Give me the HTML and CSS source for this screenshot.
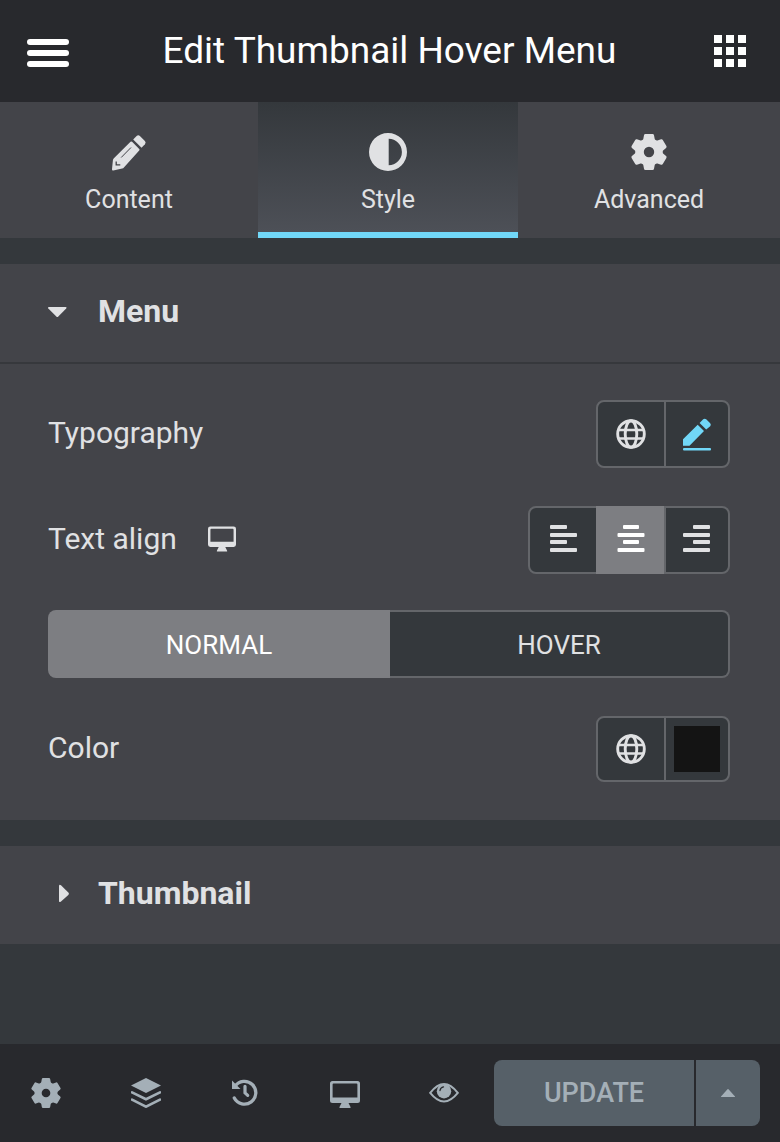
FILE: index.html
```html
<!DOCTYPE html>
<html lang="en">
<head>
<meta charset="utf-8">
<meta name="viewport" content="width=device-width, initial-scale=1">
<title>Edit Thumbnail Hover Menu</title>
<link rel="stylesheet" href="styles.css">
</head>
<body>
<svg class="sprite" aria-hidden="true">
  <symbol id="gear" viewBox="-18 -18 36 36">
    <circle r="9.5" fill="none" stroke="currentColor" stroke-width="8.6"/>
    <g fill="currentColor">
      <path id="tooth" d="M-6-11.5L-5-16.8Q-4.800-18-3.600-18H3.600Q4.800-18 5-16.800L6-11.500Z"/>
      <use href="#tooth" transform="rotate(60)"/>
      <use href="#tooth" transform="rotate(120)"/>
      <use href="#tooth" transform="rotate(180)"/>
      <use href="#tooth" transform="rotate(240)"/>
      <use href="#tooth" transform="rotate(300)"/>
    </g>
  </symbol>
  <symbol id="desktop" viewBox="0 0 30 27">
    <path fill="currentColor" fill-rule="evenodd" d="M2.500 0H27.500Q30 0 30 2.500V19.500Q30 22 27.500 22H18.500L20.500 26V27H9.500V26L11.500 22H2.500Q0 22 0 19.500V2.500Q0 0 2.500 0ZM3.500 2.600Q2.600 2.600 2.600 3.500V16.500H27.400V3.500Q27.400 2.600 26.500 2.600Z"/>
  </symbol>
  <symbol id="globe" viewBox="-15 -15 30 30">
    <g fill="none" stroke="currentColor" stroke-width="2.900">
      <circle r="13.300"/>
      <ellipse rx="5.800" ry="13.300"/>
      <path d="M-12.600-3.900H12.600M-12.600 4.500H12.600" stroke-width="2.500"/>
    </g>
  </symbol>
</svg>

<header class="header">
  <button class="icon-button" type="button" aria-label="Menu">
    <svg width="42" height="34" viewBox="0 0 42 34" fill="#fff"><rect y="5" width="42" height="6" rx="3"/><rect y="16" width="42" height="6" rx="3"/><rect y="27" width="42" height="6" rx="3"/></svg>
  </button>
  <h1 class="title">Edit Thumbnail Hover Menu</h1>
  <button class="icon-button" type="button" aria-label="Widgets">
    <svg width="32" height="34" viewBox="0 0 32 34" fill="#fff"><path d="M0 1h8v8H0zM12 1h8v8h-8zM24 1h8v8h-8zM0 13h8v8H0zM12 13h8v8h-8zM24 13h8v8h-8zM0 25h8v8H0zM12 25h8v8h-8zM24 25h8v8h-8z"/></svg>
  </button>
</header>

<nav class="tabs" role="tablist">
  <button class="tab" type="button" role="tab" aria-selected="false">
    <svg width="36" height="38" viewBox="0 -2 36 38"><g fill="currentColor"><path d="M19.500 6.800Q20.300 6 21.100 6.800L28.200 13.900Q29 14.700 28.200 15.500L12.900 32.400Q12.300 33.300 11.200 33.500L2.300 35.500Q.9 35.700 1 34.200L1.900 25.200Q2 24 2.900 23.200Z"/><path d="M22.200 4.400L25.600 1.100Q27.300-.4 28.900 1.100L33.900 6.100Q35.400 7.700 33.900 9.300L30.500 12.700Z"/></g><path d="M10.200 22.500L20 12.500" stroke="#434449"/><path d="M5.200 26.600V29.800H9.300" fill="none" stroke="#434449" stroke-width="1.300"/></svg>
    <span>Content</span>
  </button>
  <button class="tab tab-active" type="button" role="tab" aria-selected="true">
    <svg width="38" height="38" viewBox="-19 -19 38 38"><path fill="currentColor" fill-rule="evenodd" d="M0-19A19 19 0 0 1 0 19A19 19 0 0 1 0-19ZM.7-13.200V13.200A13.200 13.200 0 0 0 .7-13.200Z"/></svg>
    <span>Style</span>
  </button>
  <button class="tab" type="button" role="tab" aria-selected="false">
    <svg width="36" height="38" viewBox="0 0 36 38"><use href="#gear" y="1" width="36" height="36"/></svg>
    <span>Advanced</span>
  </button>
</nav>

<main class="sections">
  <section class="section">
    <h2 class="section-heading">
      <button class="section-toggle" type="button" aria-expanded="true">
        <svg width="22" height="18" viewBox="0 0 22 18"><path fill="currentColor" d="M1 5H17.500Q19.200 5.300 18.200 6.500L10.300 14.500Q9.300 15.500 8.300 14.500L.3 6.500Q-.7 5.300 1 5Z"/></svg>
        Menu
      </button>
    </h2>
    <div class="section-body">
      <div class="control">
        <span class="label">Typography</span>
        <div class="group">
          <button class="cell" type="button" aria-label="Global typography"><svg width="30" height="30"><use href="#globe"/></svg></button>
          <button class="cell cell-accent" type="button" aria-label="Edit typography"><svg width="30" height="34" viewBox="0 -1 30 34" fill="currentColor"><path d="M1 21.300L15.700 6.700L22 12.900L7.500 27.700H1ZM17.600 4.900L21.200 1.300Q22.700 0 24.200 1.300L28.200 5.200Q29.500 6.700 28.200 8.200L24.200 11.400Z"/><rect x="1" y="30" width="28" height="2.500" rx="1"/></svg></button>
        </div>
      </div>
      <div class="control control-align">
        <span class="label" id="align-label">Text align <button class="device" type="button" aria-label="Desktop"><svg width="28" height="26"><use href="#desktop"/></svg></button></span>
        <div class="group" role="radiogroup" aria-labelledby="align-label">
          <label class="cell"><input type="radio" name="align" value="left" aria-label="Left"><svg width="28" height="30" viewBox="0 0 28 30" fill="currentColor"><rect x="1" width="17" height="4" rx="1"/><rect x="1" y="8" width="27" height="4" rx="1"/><rect x="1" y="15" width="17" height="4" rx="1"/><rect x="1" y="23" width="27" height="4" rx="1"/></svg></label>
          <label class="cell"><input type="radio" name="align" value="center" aria-label="Center" checked><svg width="28" height="30" viewBox="0 0 28 30" fill="currentColor"><rect x="6" width="16" height="4" rx="1"/><rect x=".5" y="8" width="27" height="4" rx="1"/><rect x="6" y="15" width="16" height="4" rx="1"/><rect x=".5" y="23" width="27" height="4" rx="1"/></svg></label>
          <label class="cell"><input type="radio" name="align" value="right" aria-label="Right"><svg width="28" height="30" viewBox="0 0 28 30" fill="currentColor"><rect x="10" width="17" height="4" rx="1"/><rect y="8" width="27" height="4" rx="1"/><rect x="10" y="15" width="17" height="4" rx="1"/><rect y="23" width="27" height="4" rx="1"/></svg></label>
        </div>
      </div>
      <div class="states" role="tablist">
        <button class="state state-active" type="button" role="tab" aria-selected="true">NORMAL</button>
        <button class="state" type="button" role="tab" aria-selected="false">HOVER</button>
      </div>
      <div class="control control-color">
        <label class="label" for="color">Color</label>
        <div class="group">
          <button class="cell" type="button" aria-label="Global color"><svg width="30" height="30"><use href="#globe"/></svg></button>
          <span class="cell"><input class="swatch" type="color" id="color" value="#141414"></span>
        </div>
      </div>
    </div>
  </section>

  <section class="section">
    <h2 class="section-heading">
      <button class="section-toggle" type="button" aria-expanded="false">
        <svg width="22" height="18" viewBox="0 0 22 18"><path fill="currentColor" d="M11 2Q11.200 0 13 1.300L20.300 8.500Q21.500 9.700 20.300 10.900L13 17.600Q11.200 18.800 11 17Z"/></svg>
        Thumbnail
      </button>
    </h2>
  </section>
</main>

<footer class="footer">
  <div class="tools">
    <button class="tool" type="button" aria-label="Settings"><svg width="30" height="30"><use href="#gear"/></svg></button>
    <button class="tool" type="button" aria-label="Navigator"><svg width="30" height="30" viewBox="0 0 30 30"><path fill="currentColor" d="M15 0L30 7.500L15 15L0 7.500Z"/><path d="M1 14.300L15 21.200L29 14.300M1 21.700L15 28.700L29 21.700" fill="none" stroke="currentColor" stroke-width="2.600" stroke-linecap="round"/></svg></button>
    <button class="tool" type="button" aria-label="History"><svg width="30" height="30" viewBox="0 0 30 30"><g fill="none" stroke="currentColor" stroke-linecap="round"><path d="M5 8.300A11.400 11.400 0 1 1 4.300 20" stroke-width="3.300"/><path d="M15 8.300V14.800L17.700 17.300" stroke-width="3.200"/></g><path fill="currentColor" d="M2 2.500L10.500 11H2Z"/></svg></button>
    <button class="tool" type="button" aria-label="Responsive mode"><svg width="30" height="30" viewBox="0 -3 30 30"><use href="#desktop" width="30" height="27"/></svg></button>
    <button class="tool" type="button" aria-label="Preview"><svg width="30" height="30" viewBox="0 0 30 30"><path d="M1.200 14.800Q15-3 28.800 14.800Q15 32 1.200 14.800Z" fill="none" stroke="currentColor" stroke-width="2"/><circle cx="15" cy="13.200" r="7.200" fill="currentColor"/><path d="M11 12.500Q11.400 9.500 14.500 8.900" fill="none" stroke="#28292d" stroke-width="1.300" stroke-linecap="round"/></svg></button>
  </div>
  <div class="publish">
    <button class="update" type="button">UPDATE</button>
    <button class="update-more" type="button" aria-label="Save options"><svg width="16" height="10" viewBox="0 0 16 10"><path fill="currentColor" d="M1 8.400L7.500 1.200Q8 .7 8.500 1.200L15 8.400V9H1Z"/></svg></button>
  </div>
</footer>
</body>
</html>
```

FILE: styles.css
```css
* {
  box-sizing: border-box;
}

body {
  margin: 0;
  min-height: 100vh;
  display: flex;
  flex-direction: column;
  background: #34383c;
  color: #e0e1e3;
  font-family: Roboto, "Liberation Sans", sans-serif;
}

button {
  padding: 0;
  border: 0;
  background: none;
  color: inherit;
  font: inherit;
}

svg {
  display: block;
  flex: none;
}

.sprite {
  position: absolute;
  width: 0;
  height: 0;
}

.header {
  display: flex;
  align-items: center;
  justify-content: space-between;
  height: 102px;
  padding: 0 34px 0 27px;
  background: #28292d;
  color: #fff;
}

.title {
  margin: 0;
  padding-right: 4px;
  font-size: 37px;
  font-weight: 400;
  line-height: 46px;
}

.tabs {
  display: grid;
  grid-template-columns: 129fr 130fr 131fr;
}

.tab {
  display: flex;
  flex-direction: column;
  align-items: center;
  gap: 14px;
  height: 136px;
  padding-top: 31px;
  background: #434449;
  font-size: 25px;
  line-height: 30px;
}

.tab-active {
  border-bottom: 6px solid #71d7f7;
  background: linear-gradient(#34383c, #4d5057);
}

.sections {
  display: flex;
  flex: 1;
  flex-direction: column;
  gap: 26px;
  padding: 26px 0;
}

.section {
  background: #434449;
}

.section-heading {
  margin: 0;
  font-size: 32px;
  line-height: 38px;
}

.section-toggle {
  display: flex;
  align-items: center;
  gap: 28px;
  width: 100%;
  height: 98px;
  padding: 0 48px 4px;
  text-align: left;
}

.section-body {
  padding: 36px 50px 38px 48px;
  border-top: 2px solid #36383c;
}

.control {
  display: flex;
  align-items: center;
  justify-content: space-between;
  margin-bottom: 38px;
}

.control-align {
  margin-bottom: 36px;
}

.control-color {
  margin-bottom: 0;
}

.label {
  display: flex;
  align-items: center;
  gap: 31px;
  padding-bottom: 2px;
  font-size: 30px;
  line-height: 36px;
}

.group {
  display: flex;
  border: 2px solid #64666a;
  border-radius: 8px;
  background: #34383c;
}

.cell {
  display: flex;
  align-items: center;
  justify-content: center;
  width: 66px;
  height: 64px;
}

.cell + .cell {
  width: 68px;
  border-left: 2px solid #64666a;
}

.cell + .cell:last-child {
  width: 64px;
  border-radius: 0 6px 6px 0;
}

.cell + .cell:last-child {
  border-radius: 0;
}

.cell:has(input:checked) {
  height: 68px;
  margin: -2px 0;
  background: #7d7e82;
  border-color: #7d7e82;
  color: #fff;
}

.cell input[type="radio"] {
  position: absolute;
  opacity: 0;
}

.cell-accent {
  color: #71d7f7;
}

.control-color .cell {
  height: 62px;
}

.swatch {
  appearance: none;
  width: 46px;
  height: 46px;
  padding: 0;
  border: 0;
  background: none;
}

.swatch::-webkit-color-swatch-wrapper {
  padding: 0;
}

.swatch::-webkit-color-swatch {
  border: 0;
  border-radius: 0;
}

.states {
  display: grid;
  grid-template-columns: 171fr 170fr;
  margin-bottom: 38px;
}

.state {
  height: 68px;
  padding-top: 2px;
  border: 2px solid #64666a;
  border-left: 0;
  border-radius: 0 8px 8px 0;
  background: #34383c;
  font-size: 26px;
}

.state-active {
  border: 0;
  border-radius: 8px 0 0 8px;
  background: #7d7e82;
  color: #fff;
}

.footer {
  display: flex;
  height: 98px;
  padding: 16px 20px 16px 0;
  background: #28292d;
}

.tools {
  display: flex;
  flex: 1;
  align-items: center;
  justify-content: space-between;
  padding: 0 35px 0 31px;
  color: #a4afb7;
}

.publish {
  display: flex;
  gap: 2px;
  color: #a4afb7;
}

.update {
  width: 200px;
  border-radius: 8px 0 0 8px;
  background: #566068;
  font-size: 27px;
  font-weight: 500;
}

.update-more {
  display: flex;
  align-items: center;
  justify-content: center;
  width: 64px;
  border-radius: 0 8px 8px 0;
  background: #566068;
}
```
